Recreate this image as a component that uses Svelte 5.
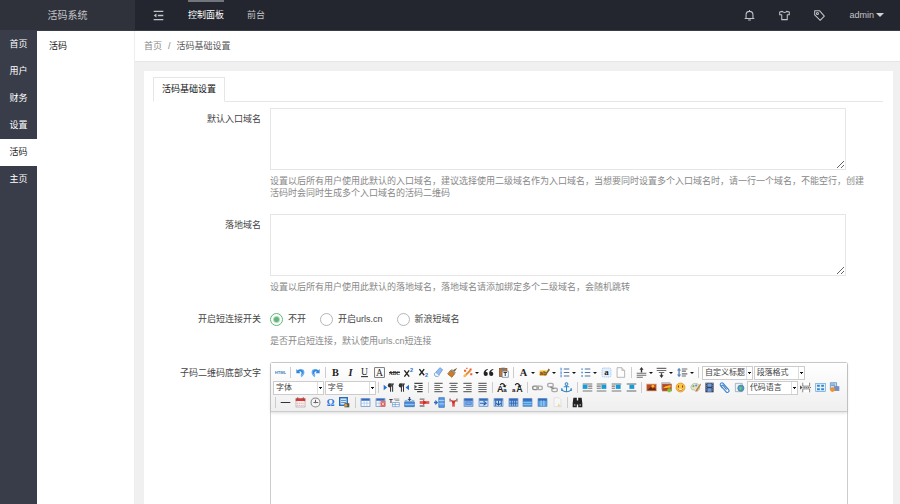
<script lang="ts">
    type Tool = { t: 'sep' } | { t: 'icon'; id: string; label: string; menu?: boolean; off?: boolean } | { t: 'select'; label: string };

    const sideItems = ['首页', '用户', '财务', '设置', '活码', '主页'];
    const activeSide = '活码';

    const shortLinks = [
        { id: 'off',  label: '不开' },
        { id: 'urls', label: '开启urls.cn' },
        { id: 'sina', label: '新浪短域名' },
    ];

    let shortLink = $state('off');
    let entryDomain = $state('');
    let landDomain = $state('');

    const sep: Tool = { t: 'sep' };
    const icon = (id: string, label: string, menu = false, off = false): Tool => ({ t: 'icon', id, label, menu, off });
    const select = (label: string): Tool => ({ t: 'select', label });

    const rows: { id: string; tools: Tool[] }[] = [
        {
            id: 'first',
            tools: [
                icon('html', '源代码'), sep,
                icon('undo', '撤销'), icon('redo', '重做'), sep,
                icon('bold', '加粗'), icon('italic', '斜体'), icon('underline', '下划线'), icon('border', '字符边框'),
                icon('strike', '删除线'), icon('sup', '上标'), icon('sub', '下标'), icon('eraser', '清除格式'),
                icon('brush', '格式刷'), icon('wand', '自动排版', true), icon('quote', '引用'), icon('paste', '纯文本粘贴'), sep,
                icon('color', '字体颜色', true), icon('mark', '背景色', true), icon('ol', '有序列表', true), icon('ul', '无序列表', true),
                icon('all', '全选'), icon('doc', '清空文档'), sep,
                icon('before', '段前距', true), icon('after', '段后距', true), icon('lineheight', '行间距', true), sep,
                select('自定义标题'), select('段落格式'),
            ],
        },
        {
            id: 'second',
            tools: [
                select('字体'), select('字号'), sep,
                icon('ltr', '从左向右输入'), icon('rtl', '从右向左输入'), icon('indent', '首行缩进'), sep,
                icon('left', '居左对齐'), icon('center', '居中对齐'), icon('right', '居右对齐'), icon('justify', '两端对齐'), sep,
                icon('upper', '字母大写'), icon('lower', '字母小写'), sep,
                icon('link', '超链接'), icon('unlink', '取消链接'), icon('anchor', '锚点'), sep,
                icon('imgnone', '默认'), icon('imgleft', '左浮动'), icon('imgright', '右浮动'), icon('imgcenter', '居中'), sep,
                icon('image', '单图上传'), icon('images', '多图上传'), icon('smile', '表情'), icon('palette', '涂鸦'),
                icon('video', '视频'), icon('clip', '附件'), icon('map', '地图'), select('代码语言'),
                icon('pagebreak', '分页'), icon('template', '模板'), icon('background', '背景'),
            ],
        },
        {
            id: 'third',
            tools: [
                sep,
                icon('hr', '分隔线'), icon('date', '日期'), icon('time', '时间'), icon('omega', '特殊字符'), icon('snap', '截图'), sep,
                icon('table', '插入表格'), icon('tabledel', '删除表格'), icon('tabletitle', '表格前插入行'), icon('rowin', '前插入行'),
                icon('rowdel', '删除行'), icon('colin', '前插入列'), icon('coldel', '删除列'), icon('merge', '合并多个单元格'),
                icon('mergeright', '右合并单元格'), icon('mergedown', '下合并单元格'), icon('splitcell', '拆分成行'),
                icon('splitrow', '拆分成列'), icon('splitcol', '完全拆分单元格'), icon('chart', '图表', false, true), sep,
                icon('search', '查询替换'),
            ],
        },
    ];

    const text = (s: string, size: number, extra = '', y = 13) =>
        `<text x="8" y="${y}" font-size="${size}" text-anchor="middle" font-family="Liberation Serif, serif" fill="#222" ${extra}>${s}</text>`;
    const lines = (d: string, c = '#6c6c6c') => `<path d="${d}" fill="none" stroke="${c}" stroke-width="1.5"/>`;
    const block = (x: number, y: number) => `<rect x="${x}" y="${y}" width="7" height="6" fill="#159bd8"/>`;
    const grid = (inner = '', fill = '#d7e8fb') =>
        `<rect x="1.5" y="2.5" width="13" height="11" fill="${fill}" stroke="#4f7fc4"/><path d="M2 4h12" stroke="#3569b8" stroke-width="3"/>${inner}`;

    const icons: Record<string, string> = {
        html: '<text x="8" y="10" font-size="6" font-weight="700" text-anchor="middle" font-family="Liberation Sans, sans-serif" fill="#3a7dbd">HTML</text>',
        undo: '<path d="M2 3v6h6L6 7c3-2 5 1 2 6 7-4 6-12-3-9L4 5z" fill="#2f86dc"/><path d="M11 4c3 3 2 7-2 10" fill="none" stroke="#5faaf0" stroke-width="2"/>',
        redo: '<path d="M14 3v6H8l2-2c-3-2-5 1-2 6-7-4-6-12 3-9l1 1z" fill="#2f86dc"/><path d="M5 4c-3 3-2 7 2 10" fill="none" stroke="#5faaf0" stroke-width="2"/>',
        bold: text('B', 15, 'font-weight="700"'),
        italic: text('I', 15, 'font-weight="700" font-style="italic"'),
        underline: text('U', 14, '', 12) + lines('M3 14h10', '#222'),
        border: '<rect x="1" y="1" width="14" height="14" fill="none" stroke="#444"/>' + text('A', 14),
        strike: text('ABC', 8, 'font-weight="700"', 11) + lines('M0 8h16', '#333'),
        sup: '<path d="M2 5l7 9M9 5l-7 9" stroke="#222" stroke-width="2"/><text x="10" y="7" font-size="8" font-weight="700" fill="#246fd0">2</text>',
        sub: '<path d="M2 3l7 9M9 3l-7 9" stroke="#222" stroke-width="2"/><text x="10" y="15" font-size="8" font-weight="700" fill="#246fd0">2</text>',
        eraser: '<path d="M10 1l4 3-7 10-4-1-1-3z" fill="#8fbcf5" stroke="#568ccc"/><path d="M4 8l5 4-2 2-4-1-1-3z" fill="#fff" stroke="#7a9fcc"/>',
        brush: '<path d="M15 1l-4 6-3-2z" fill="#7d5427"/><path d="M7 3l6 5-2 2-6-5z" fill="#999"/><path d="M5 5l6 5-4 5-6-5z" fill="#c87e2d" stroke="#955615"/>',
        wand: '<path d="M3 14L12 5" stroke="#e98b3b" stroke-width="3"/><path d="M11 2h3v3h-3zM3 4h3v3H3zM12 9h3v3h-3zM6 1h2v2H6z" fill="#ed5d28"/><path d="M3 14l3-3" stroke="#f4bf55" stroke-width="3"/>',
        quote: '<path d="M7 3C2 4 1 7 1 10a3 3 0 1 0 3-3c0-1 1-2 3-3zM15 3c-5 1-6 4-6 7a3 3 0 1 0 3-3c0-1 1-2 3-3z" fill="#222"/>',
        paste: '<rect x="2" y="2" width="11" height="12" fill="#b9783b" stroke="#855025"/><path d="M5 1h5v3H5z" fill="#777"/><path d="M6 6h9v9H6z" fill="#fff" stroke="#526d9e"/><path d="M8 8h5M10.5 8v5" stroke="#333" stroke-width="1.5"/>',
        color: text('A', 15, 'font-weight="700"'),
        mark: '<path d="M1 5h10v8H1z" fill="#f7b731"/><text x="6" y="11" font-size="9" font-weight="700" text-anchor="middle" fill="#543">ab</text><path d="M14 2l-5 8-1 3 3-2 5-7z" fill="#8b5d2c"/>',
        ol: lines('M7 3h8M7 8h8M7 13h8', '#4e74a4') + lines('M3 1v4M3 6v4M3 11v4', '#3a80d0'),
        ul: lines('M7 3h8M7 8h8M7 13h8', '#4e74a4') + '<path d="M2 2h2v2H2zM2 7h2v2H2zM2 12h2v2H2z" fill="#287bd3"/>',
        all: '<rect x="1.5" y="1.5" width="13" height="13" rx="2" fill="#e4f0ff" stroke="#8db6e8" stroke-dasharray="2 1"/>' + text('a', 13, 'font-weight="700"', 12),
        doc: '<path d="M3 1h7l4 4v10H3z" fill="#fdfdfd" stroke="#999"/><path d="M10 1v4h4" fill="#ddd" stroke="#aaa"/>',
        before: lines('M1 9h14M1 12h14M1 15h9') + '<path d="M8 0l3 4H9v4H7V4H5z" fill="#333"/>',
        after: lines('M1 2h14M1 5h14M4 8h8') + '<path d="M8 16l3-4H9V9H7v3H5z" fill="#333"/>',
        lineheight: lines('M7 3h8M7 6h6M7 10h8M7 13h6') + '<path d="M3 1l3 4H4v6h2l-3 4-3-4h2V5H0z" fill="#5c86b8"/>',
        ltr: '<path d="M1 4l5 4-5 4z" fill="#246fd0"/><path d="M11 3v11M14 3v11M8 3h8" stroke="#333" stroke-width="1.5"/><circle cx="10" cy="5" r="3" fill="#333"/>',
        rtl: '<path d="M16 4l-5 4 5 4z" fill="#246fd0"/><path d="M5 3v11M8 3v11M2 3h8" stroke="#333" stroke-width="1.5"/><circle cx="4" cy="5" r="3" fill="#333"/>',
        indent: lines('M2 2h12M8 5h6M8 8h6M2 11h12M6 14h8', '#444') + '<path d="M2 4l4 3-4 3z" fill="#555"/>',
        left: lines('M2 2h12M2 5h8M2 8h12M2 11h8M2 14h12'),
        center: lines('M2 2h12M4 5h8M2 8h12M4 11h8M2 14h12'),
        right: lines('M2 2h12M6 5h8M2 8h12M6 11h8M2 14h12'),
        justify: lines('M2 2h12M2 5h12M2 8h12M2 11h12M2 14h12'),
        upper: '<text x="0" y="15" font-size="13" font-weight="700" fill="#222">A</text><text x="9" y="15" font-size="9" font-weight="700" fill="#222">a</text><path d="M4 4c2-4 7-3 8 1l2-1-2 4-4-2 2-1C9 3 7 2 5 5z" fill="#222"/>',
        lower: '<text x="0" y="15" font-size="9" font-weight="700" fill="#222">a</text><text x="6" y="15" font-size="13" font-weight="700" fill="#222">A</text><path d="M4 4c2-4 7-3 8 1l2-1-2 4-4-2 2-1C9 3 7 2 5 5z" fill="#222"/>',
        link: '<rect x="1" y="6" width="8" height="5" rx="2" fill="none" stroke="#888" stroke-width="2"/><rect x="7" y="6" width="8" height="5" rx="2" fill="none" stroke="#aaa" stroke-width="2"/>',
        unlink: '<rect x="1" y="2" width="8" height="5" rx="2" fill="none" stroke="#aaa" stroke-width="2"/><rect x="7" y="9" width="8" height="5" rx="2" fill="none" stroke="#aaa" stroke-width="2"/><path d="M5 7l5 3" stroke="#888" stroke-width="2"/>',
        anchor: '<circle cx="8" cy="3" r="2" fill="none" stroke="#3686ca" stroke-width="1.5"/><path d="M8 5v10M4 7h8M1 9c1 7 13 7 14 0M1 9v4M15 9v4" fill="none" stroke="#3686ca" stroke-width="1.5"/>',
        imgnone: lines('M1 3h14M9 6h6M9 9h6M1 13h14', '#777') + block(1, 4),
        imgleft: lines('M1 3h14M1 6h6M1 9h6M1 13h14', '#777') + block(8, 4),
        imgright: lines('M1 3h14M1 6h5M1 9h5M1 13h14', '#777') + block(7, 4),
        imgcenter: lines('M1 3h14M1 13h14', '#666') + block(5, 4),
        image: '<rect x="1" y="3" width="14" height="10" fill="#c14a1b" stroke="#d5b19c"/><path d="M2 12l5-5 3 3 2-2 3 4z" fill="#5c2a15"/><circle cx="10" cy="6" r="2" fill="#ffb52c"/>',
        images: '<rect x="1" y="1" width="12" height="10" fill="#ddd" stroke="#aaa"/><rect x="2" y="3" width="13" height="10" fill="#bb4419" stroke="#966"/><path d="M3 9c3-4 8-3 11-5v4z" fill="#ffb52c"/><path d="M12 9v6M9 12h6" stroke="#7cc52f" stroke-width="3"/>',
        smile: '<circle cx="8" cy="8" r="6.5" fill="#ffc541" stroke="#db8a20"/><path d="M5 5v3M11 5v3" stroke="#6c3b0b" stroke-width="1.5"/><path d="M4 10c2 3 6 3 8 0" fill="#fff" stroke="#8a4d10"/>',
        palette: '<path d="M8 2C3 2 0 6 2 10c1 3 4 0 5 2 0 3 7 2 7-4 0-4-3-6-6-6z" fill="#e9e2d1" stroke="#b8a98c"/><circle cx="5" cy="6" r="1.5" fill="#5abf55"/><circle cx="9" cy="5" r="1.5" fill="#4594dd"/><path d="M15 2l-6 9-1 3 3-2 5-8z" fill="#b9822f"/>',
        video: '<rect x="2" y="1" width="12" height="14" fill="#36435d"/><path d="M5 2h6v5H5zM5 9h6v5H5z" fill="#6d9ddf"/><path d="M3.5 2v12M12.5 2v12" stroke="#d9e1ee" stroke-dasharray="1 2"/>',
        clip: '<path d="M5 9L2 5c-1-3 2-5 4-3l8 9c2 3-2 6-4 3L4 7c-1-2 1-3 2-2l5 6" fill="none" stroke="#367dcc" stroke-width="1.5"/>',
        map: '<path d="M2 2h10v12H2z" fill="#eef1f6" stroke="#8a9bb4"/><circle cx="10" cy="9" r="4.5" fill="#4c9ccc" stroke="#41808e"/><path d="M8 7l3 1-1 4-2-2z" fill="#7bca60"/>',
        pagebreak: '<path d="M4 1v5h10V1M4 15v-5h10v5" fill="#fff" stroke="#555"/><path d="M5 8h11" stroke="#333" stroke-dasharray="2 1"/><path d="M0 5l4 3-4 3z" fill="#555"/>',
        template: '<rect x="1" y="2" width="14" height="12" fill="#e5f2fd" stroke="#5ba0db"/><path d="M3 4h4v3H3zM9 4h4v3H9zM3 9h4v3H3zM9 9h4v3H9z" fill="#3685cb"/>',
        background: '<path d="M2 1h9v10H2z" fill="#cfe2f7" stroke="#4980bb"/><path d="M3 3h6M3 5h6" stroke="#4980bb"/><path d="M7 6h8v7H7z" fill="#7a8cbb"/><circle cx="5" cy="11" r="3.5" fill="#ed9430"/>',
        hr: lines('M1 8h14', '#333'),
        date: '<rect x="1.5" y="2.5" width="13" height="12" fill="#fff" stroke="#a99"/><path d="M1 2h14v4H1z" fill="#d83a32"/><path d="M4 0v4M12 0v4" stroke="#555"/><path d="M3 9h10M3 12h10" stroke="#b66" stroke-dasharray="2 1"/>',
        time: '<circle cx="8" cy="8" r="6.5" fill="#f5f5f5" stroke="#888" stroke-width="1.5"/><path d="M8 4v5M5 8h7" fill="none" stroke="#666" stroke-width="1.5"/>',
        omega: text('Ω', 14, 'font-weight="700" style="fill:#2a74e0"', 13),
        snap: '<rect x="1" y="1" width="11" height="11" fill="#d5e9ff" stroke="#2469b2" stroke-width="2"/><path d="M3 5h7M3 8h7" stroke="#2469b2"/><path d="M8 9h7v6H8z" fill="#555"/><circle cx="10" cy="12" r="2" fill="#eda134"/>',
        table: grid('<path d="M2 9h12M6 5v8M10 5v8" stroke="#9abce6"/>', '#fff'),
        tabledel: grid('<path d="M2 9h12M6 5v8" stroke="#9abce6"/><path d="M8 6h7v8H8z" fill="#e55c53"/><path d="M10 8l3 4M13 8l-3 4" stroke="#fff"/>', '#fff'),
        tabletitle: '<text x="0" y="8" font-size="9" font-weight="700" fill="#333">T</text><path d="M5 8h10v6H5zM5 11h10M9 8v6" fill="#fff" stroke="#6795ce"/><path d="M7 3h8M9 5h6" stroke="#777"/>',
        rowin: '<path d="M1 7h14v7H1z" fill="#4c91df" stroke="#2865af"/><path d="M1 11h14" stroke="#bddafd"/><path d="M8 6L5 3h2V0h2v3h2z" fill="#2f5180"/><path d="M1 5h4M11 5h4" stroke="#6a93c7"/>',
        rowdel: '<path d="M1 3h7M1 13h7" stroke="#777" stroke-width="2"/><path d="M1 6h14v4H1z" fill="#e8534e"/><path d="M6 4l5 4-5 4z" fill="#cb302d"/>',
        colin: '<path d="M7 1h8v14H7z" fill="#5a9ce6" stroke="#2865af"/><path d="M7 5h8M7 10h8" stroke="#d2e6ff"/><path d="M6 8L2 4v3H0v2h2v3z" fill="#2b6cc0"/>',
        coldel: '<path d="M3 2v5M13 2v5" stroke="#888" stroke-width="2"/><path d="M6 5h4v9H6z" fill="#e8534e"/><path d="M2 3l6 7 6-7-6 3z" fill="#cb302d"/>',
        merge: grid('<path d="M4 7h8v4H4z" fill="#74a9eb" stroke="#4f7fc4"/>', '#98bff0'),
        mergeright: grid('<path d="M3 9h7M8 6l4 3-4 3" fill="none" stroke="#215caa" stroke-width="1.5"/>', '#cde2fb'),
        mergedown: grid('<path d="M8 5v6M5 9l3 3 3-3M4 5v8M12 5v8" fill="none" stroke="#215caa" stroke-width="1.5"/>', '#cde2fb'),
        splitcell: grid('<path d="M2 9h12M5 5v8M8 5v8M11 5v8" stroke="#2458a0"/>', '#8fb9ee'),
        splitrow: grid('<path d="M2 8h12M2 11h12" stroke="#9fd3f5"/>', '#4c97d8'),
        splitcol: grid('<path d="M6 5v8M10 5v8" stroke="#d0eaff"/>', '#58a1e2'),
        chart: '<path d="M3 1h7l3 3v10H3z" fill="#fafafa" stroke="#ccc"/><path d="M9 9l5 5H8z" fill="#e7ce77"/>',
        search: '<path d="M2 1h5v4h2V1h5l1 8v6H9v-4H7v4H1V9z" fill="#222"/><path d="M3 10h2v3H3zM11 10h2v3h-2z" fill="#888"/>',
    };
</script>

<svelte:head>
    <title>活码基础设置</title>
</svelte:head>

<div class="layout">
    <header class="topbar">
        <div class="logo">活码系统</div>
        <nav class="top-nav">
            <button class="fold" aria-label="收起菜单">
                <svg width="11" height="11" viewBox="0 0 16 16" fill="none" stroke="currentColor" stroke-width="2" aria-hidden="true">
                    <path d="M1 2h14M7 8h8M1 14h14"/>
                    <path d="M5 5v6L1 8z" fill="currentColor" stroke="none"/>
                </svg>
            </button>
            <a href="#panel" class="active">控制面板</a>
            <a href="#front">前台</a>
        </nav>
        <div class="top-tools">
            <button aria-label="消息">
                <svg width="11" height="11" viewBox="0 0 16 16" fill="none" stroke="currentColor" stroke-width="1.5" aria-hidden="true">
                    <path d="M3 12V7a5 5 0 0 1 10 0v5M1 12.5h14M6 14.5h4M8 0v2"/>
                </svg>
            </button>
            <button aria-label="主题">
                <svg width="11" height="11" viewBox="0 0 16 16" fill="none" stroke="currentColor" stroke-width="1.5" stroke-linejoin="round" aria-hidden="true">
                    <path d="M5 2c1 2 5 2 6 0l4 1v4h-3v7H4V7H1V3z"/>
                </svg>
            </button>
            <button aria-label="标签">
                <svg width="11" height="11" viewBox="0 0 16 16" fill="none" stroke="currentColor" stroke-width="1.5" stroke-linejoin="round" aria-hidden="true">
                    <path d="M1 1h7l7 8-6 6-8-8z"/>
                    <circle cx="5" cy="5" r="1.5"/>
                </svg>
            </button>
            <a href="#user" class="user">admin <span class="arrow"></span></a>
        </div>
    </header>

    <div class="body">
        <nav class="side">
            {#each sideItems as item}
                <a href="#{item}" class:active={item === activeSide}>{item}</a>
            {/each}
        </nav>
        <nav class="sub">
            <a href="#sub">活码</a>
        </nav>

        <main class="main">
            <div class="crumbs">
                <a href="#home">首页</a>
                <span class="slash">/</span>
                <span class="here">活码基础设置</span>
            </div>

            <section class="card">
                <div class="tabs">
                    <button class="tab">活码基础设置</button>
                </div>

                <form class="form">
                    <div class="field">
                        <label class="name" for="entry">默认入口域名</label>
                        <div class="value">
                            <textarea id="entry" bind:value={entryDomain}></textarea>
                            <p class="help">设置以后所有用户使用此默认的入口域名，建议选择使用二级域名作为入口域名，当想要同时设置多个入口域名时，请一行一个域名，不能空行，创建<br>活码时会同时生成多个入口域名的活码二维码</p>
                        </div>
                    </div>

                    <div class="field">
                        <label class="name" for="land">落地域名</label>
                        <div class="value">
                            <textarea id="land" bind:value={landDomain}></textarea>
                            <p class="help">设置以后所有用户使用此默认的落地域名，落地域名请添加绑定多个二级域名，会随机跳转</p>
                        </div>
                    </div>

                    <div class="field" role="radiogroup" aria-labelledby="short-name">
                        <span class="name" id="short-name">开启短连接开关</span>
                        <div class="value">
                            <div class="radios">
                                {#each shortLinks as opt}
                                    <label class="radio">
                                        <input type="radio" name="short" value={opt.id} bind:group={shortLink} />
                                        {opt.label}
                                    </label>
                                {/each}
                            </div>
                            <p class="help">是否开启短连接，默认使用urls.cn短连接</p>
                        </div>
                    </div>

                    <div class="field grow">
                        <label class="name" for="footer-text">子码二维码底部文字</label>
                        <div class="editor">
                            <div class="toolbar">
                                {#each rows as row}
                                    <div class="tool-row {row.id}">
                                        {#each row.tools as tool}
                                            {#if tool.t === 'sep'}
                                                <span class="sep"></span>
                                            {:else if tool.t === 'select'}
                                                <select aria-label={tool.label}>
                                                    <option>{tool.label}</option>
                                                </select>
                                            {:else}
                                                <button type="button" class="tool" class:menu={tool.menu} class:off={tool.off} aria-label={tool.label}>
                                                    <svg width="11" height="11" viewBox="0 0 16 16" aria-hidden="true">{@html icons[tool.id]}</svg>
                                                </button>
                                            {/if}
                                        {/each}
                                    </div>
                                {/each}
                            </div>
                            <textarea id="footer-text" class="editor-text"></textarea>
                        </div>
                    </div>
                </form>
            </section>
        </main>
    </div>
</div>

<style>
    :global(body) {
        font-family: "Liberation Sans", "Noto Sans CJK SC", sans-serif;
        font-size: 9px;
        color: #444;
        background: #f0f0f0;
    }
    a { color: inherit; text-decoration: none; }
    button {
        padding: 0;
        border: none;
        background: none;
        color: inherit;
        font: inherit;
        cursor: pointer;
    }
    svg { display: block; }

    .layout {
        display: flex;
        flex-direction: column;
        min-height: 100vh;
    }

    .topbar {
        display: flex;
        height: 31px;
        background: #23262e;
        color: #c3c4c7;
        box-sizing: border-box;
        border-bottom: 1px solid #393d49;
    }
    .logo {
        width: 135px;
        background: #2f323b;
        font-size: 10px;
        line-height: 31px;
        text-align: center;
    }
    .top-nav {
        display: flex;
        align-items: stretch;
        flex: 1;
        gap: 23px;
        padding-left: 18px;
        line-height: 31px;
    }
    .fold { padding-right: 1px; }
    .top-nav .active {
        color: #fff;
        box-shadow: inset 0 2px #72757b;
    }
    .top-tools {
        display: flex;
        align-items: center;
        gap: 24px;
        padding-right: 16px;
    }
    .user {
        display: flex;
        align-items: center;
        gap: 2px;
    }
    .arrow {
        border: 4px solid transparent;
        border-top-color: #d0d1d3;
        border-bottom: none;
    }

    .body {
        display: flex;
        flex: 1;
    }
    .side {
        width: 37px;
        background: #393d49;
        color: #fff;
    }
    .side a {
        display: block;
        line-height: 27px;
        text-align: center;
    }
    .side .active {
        background: #fff;
        color: #222;
    }
    .sub {
        width: 98px;
        background: #fff;
        border-right: 1px solid #eee;
        box-sizing: border-box;
    }
    .sub a {
        display: block;
        padding-left: 12px;
        line-height: 31px;
        color: #111;
    }

    .main {
        display: flex;
        flex-direction: column;
        flex: 1;
        min-width: 0;
    }
    .crumbs {
        display: flex;
        gap: 6px;
        padding-left: 9px;
        line-height: 30px;
        background: #fff;
        border-bottom: 1px solid #e6e6e6;
        color: #888;
    }
    .here { color: #555; }

    .card {
        display: flex;
        flex-direction: column;
        flex: 1;
        margin: 9px 7px 0 9px;
        padding: 6px 10px 0 9px;
        background: #fff;
    }
    .tabs {
        display: flex;
        border-bottom: 1px solid #e6e6e6;
    }
    .tab {
        margin-bottom: -1px;
        padding: 0 8px;
        border: 1px solid #e6e6e6;
        border-bottom-color: #fff;
        line-height: 23px;
        background: #fff;
        color: #111;
    }

    .form {
        display: flex;
        flex-direction: column;
        flex: 1;
        padding-top: 6px;
    }
    .field {
        display: flex;
        gap: 9px;
        margin-bottom: 15px;
    }
    .grow {
        flex: 1;
        margin-bottom: 0;
    }
    .name {
        flex: none;
        width: 108px;
        line-height: 23px;
        text-align: right;
        white-space: nowrap;
    }
    .value {
        flex: 1;
        min-width: 0;
        padding-right: 37px;
    }
    textarea {
        display: block;
        width: 100%;
        height: 62px;
        box-sizing: border-box;
        border: 1px solid #e6e6e6;
        outline: none;
        font: inherit;
        resize: vertical;
    }
    .help {
        margin: 5px 0 0;
        line-height: 12px;
        color: #888;
        white-space: nowrap;
    }
    .radios {
        display: flex;
        gap: 14px;
        line-height: 23px;
    }
    .radios + .help { margin-top: 4px; }
    .radio {
        display: flex;
        align-items: center;
        gap: 5px;
    }
    .radio input {
        appearance: none;
        width: 13px;
        height: 13px;
        margin: 0;
        border: 1px solid #b5b5b5;
        border-radius: 50%;
    }
    .radio input:checked {
        border-color: #5fb878;
        background: radial-gradient(circle, #5fb878 2px, #fff 4px);
    }

    .editor {
        display: flex;
        flex-direction: column;
        flex: 1;
        min-width: 0;
        margin-right: 35px;
        border: 1px solid #ccc;
        border-bottom: none;
        border-radius: 3px 3px 0 0;
    }
    .toolbar {
        padding: 2px 2px 1px;
        border-bottom: 1px solid #ccc;
        background: linear-gradient(#fff, #efefef);
        box-shadow: 0 1px 3px rgba(0, 0, 0, 0.15);
    }
    .tool-row {
        display: flex;
        align-items: center;
        justify-content: space-between;
        height: 15px;
    }
    .first { max-width: 532px; }
    .second { max-width: 569px; }
    .third { max-width: 312px; }
    .tool {
        display: flex;
        align-items: center;
        justify-content: center;
        width: 14px;
    }
    .menu {
        width: 20px;
        gap: 2px;
    }
    .menu::after {
        content: '';
        border: 2px solid transparent;
        border-top-color: #111;
        border-bottom: none;
    }
    .off { opacity: 0.6; }
    .sep {
        width: 1px;
        height: 11px;
        margin: 0 2px;
        background: #ccc;
    }
    select {
        appearance: none;
        width: 51px;
        height: 14px;
        padding: 0 0 0 2px;
        border: 1px solid #ccc;
        border-radius: 0;
        background:
            linear-gradient(#111, #111) right 1px top 5px / 3px 1px no-repeat,
            linear-gradient(#111, #111) right 2px top 6px / 1px 1px no-repeat,
            linear-gradient(#ddd, #ddd) right 5px top / 1px 100% no-repeat,
            #fff;
        color: #444;
        font: inherit;
        font-size: 8px;
    }
    .editor-text {
        flex: 1;
        height: 0;
        min-height: 80px;
        border: none;
        background: transparent;
        resize: none;
    }
</style>
